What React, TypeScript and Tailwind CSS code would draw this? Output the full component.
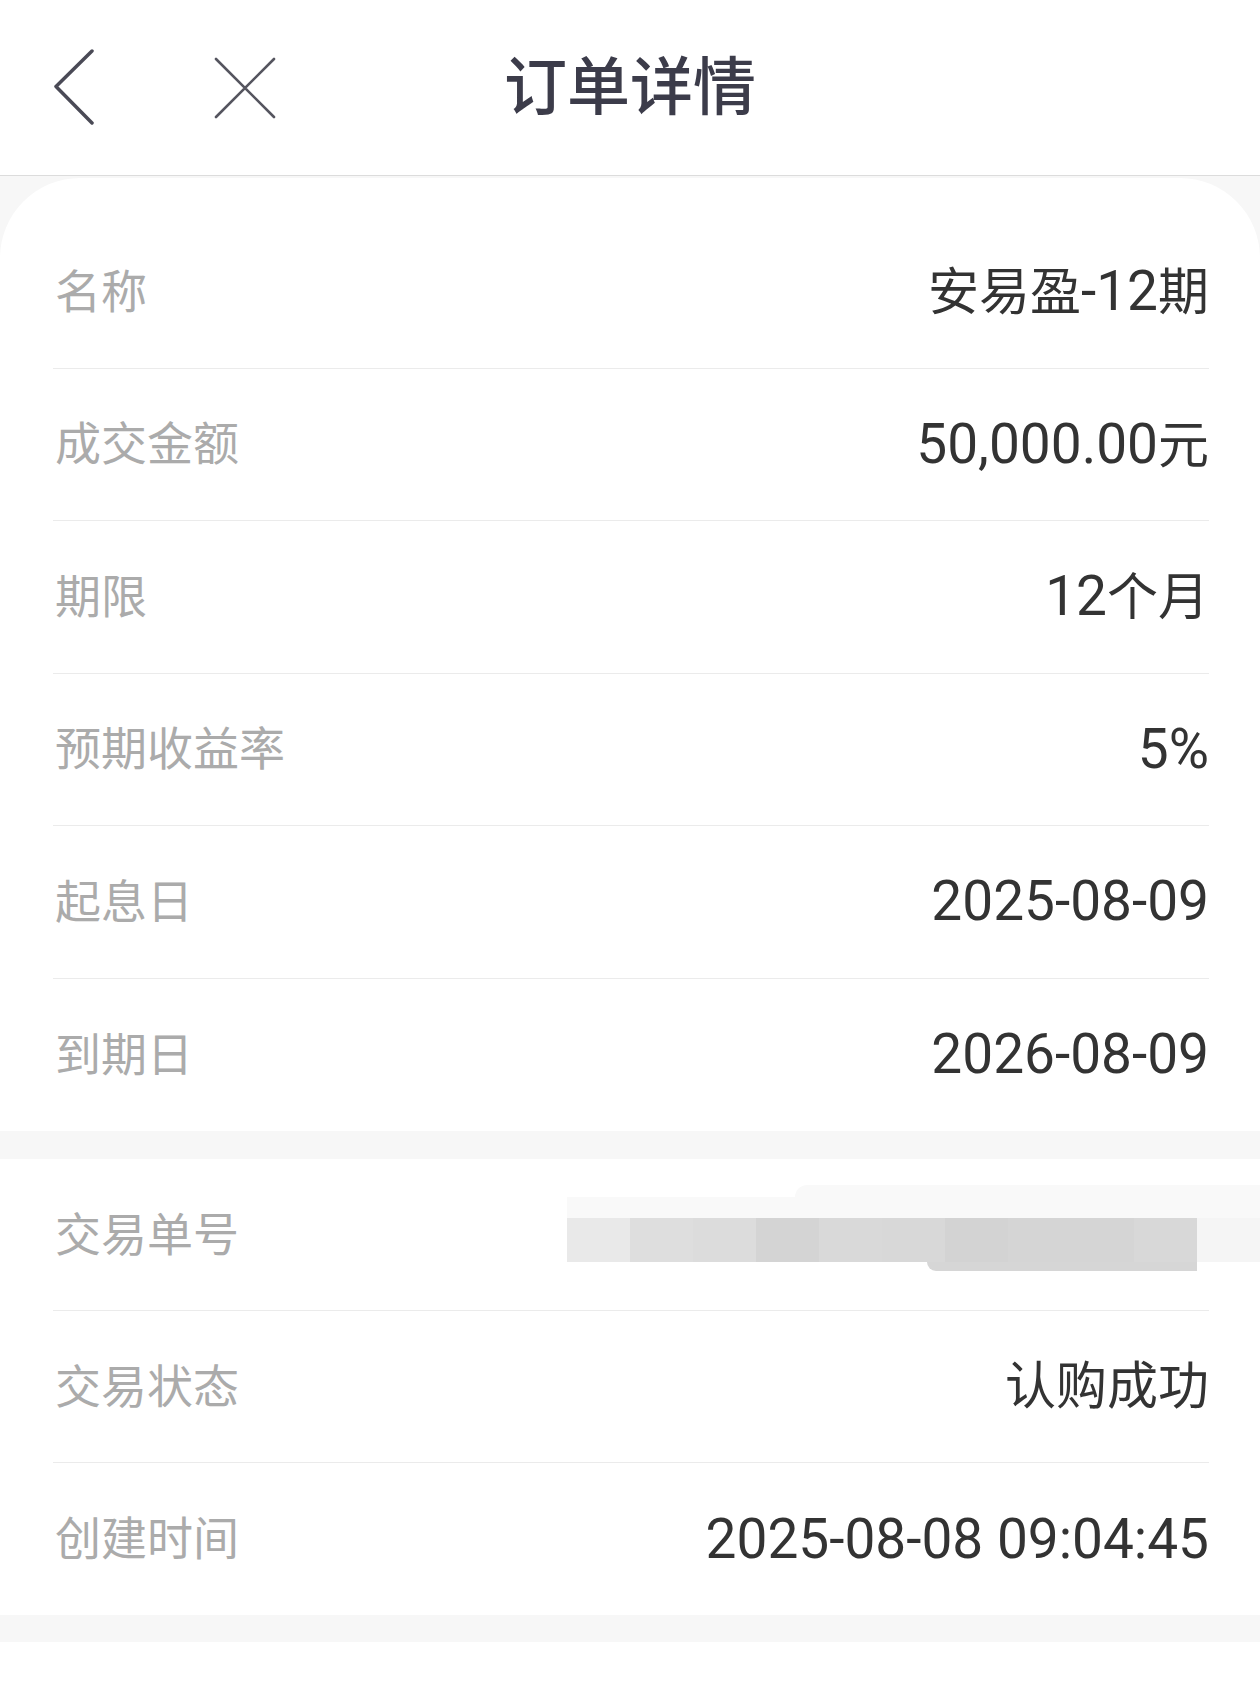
import React from 'react'

type Row = { label: string; value?: string }

const first: Row[] = [
  { label: '名称', value: '安易盈-12期' },
  { label: '成交金额', value: '50,000.00元' },
  { label: '期限', value: '12个月' },
  { label: '预期收益率', value: '5%' },
  { label: '起息日', value: '2025-08-09' },
  { label: '到期日', value: '2026-08-09' },
]

const second: Row[] = [
  { label: '交易单号' },
  { label: '交易状态', value: '认购成功' },
  { label: '创建时间', value: '2025-08-08 09:04:45' },
]

const blocks = ['#e9e9e9', '#dedede', '#dcdcdc', '#d4d4d4', '#d9d9d9', '#d8d8d8', '#d3d3d3', '#d5d5d5', '#d5d5d5', '#d8d8d8']

// latin runs render a bit larger than the CJK ones, like the system font does
function Value({ text }: { text: string }) {
  const parts = text.match(/[\x20-\x7e]+|[^\x20-\x7e]+/g) || []
  return (
    <span className="whitespace-pre leading-none text-[#333333]">
      {parts.map((p, i) =>
        /^[\x20-\x7e]+$/.test(p) ? (
          <span key={i} className="text-[55px]">{p}</span>
        ) : (
          <span key={i} className="text-[51px]">{p}</span>
        ),
      )}
    </span>
  )
}

function Redacted() {
  return (
    <div className="-mr-[51px] mb-[14px] flex w-[693px] flex-col">
      <div className="flex justify-end">
        <div className="h-[12px] w-[465px] rounded-tl-[14px] bg-[#f9f9f9]" />
      </div>
      <div className="h-[21px] bg-[#f9f9f9]" />
      <div className="flex h-[44px]">
        {blocks.map((c, i) => (
          <div key={i} className="h-full w-[63px]" style={{ backgroundColor: c }} />
        ))}
        <div className="h-full flex-1 bg-[#f5f5f5]" />
      </div>
      <div className="flex justify-end pr-[63px]">
        <div className="h-[9px] w-[270px] rounded-bl-[10px] bg-[#d6d6d6]" />
      </div>
    </div>
  )
}

function DetailRow({ row, last, tall }: { row: Row; last: boolean; tall?: boolean }) {
  return (
    <div
      className={`flex items-center justify-between ${tall ? 'h-[152.5px]' : 'h-[152px]'} ${
        last ? '' : 'border-b border-[#ebebeb]'
      }`}
    >
      <span className="pl-[2px] text-[46px] leading-none text-[#ababab]">{row.label}</span>
      {row.value ? <Value text={row.value} /> : <Redacted />}
    </div>
  )
}

export default function App() {
  return (
    <div className="min-h-[1681px] w-full bg-white font-['Roboto','Noto_Sans_CJK_SC',sans-serif]">
      <header className="grid h-[176px] grid-cols-[1fr_auto_1fr] items-center border-b border-[#dcdcdc]">
        <div className="flex items-center pl-[53px]">
          <svg width="44" height="78" viewBox="0 0 44 78" fill="none" className="mr-[121px]">
            <path d="M39 2 L3 37.5 L39 74" stroke="#4a4a56" strokeWidth="3.5" strokeLinecap="round" strokeLinejoin="round" />
          </svg>
          <svg width="62" height="62" viewBox="0 0 62 62" fill="none" className="-ml-[4px]">
            <path d="M2 2 L60 60 M60 2 L2 60" stroke="#55555f" strokeWidth="2.6" strokeLinecap="round" />
          </svg>
        </div>
        <h1 className="text-[63px] font-medium leading-none text-[#3c3c4a]">订单详情</h1>
        <div />
      </header>

      <main className="bg-[#f7f7f7] pt-[2px]">
        <section className="rounded-t-[80px] bg-white pl-[53px] pr-[51px] pt-[38px]">
          {first.map((r, i) => (
            <DetailRow key={r.label} row={r} last={i === first.length - 1} tall />
          ))}
        </section>

        <section className="mt-[28px] bg-white pl-[53px] pr-[51px]">
          {second.map((r, i) => (
            <DetailRow key={r.label} row={r} last={i === second.length - 1} />
          ))}
        </section>

        <div className="h-[27px]" />
        <div className="h-[39px] bg-white" />
      </main>
    </div>
  )
}
